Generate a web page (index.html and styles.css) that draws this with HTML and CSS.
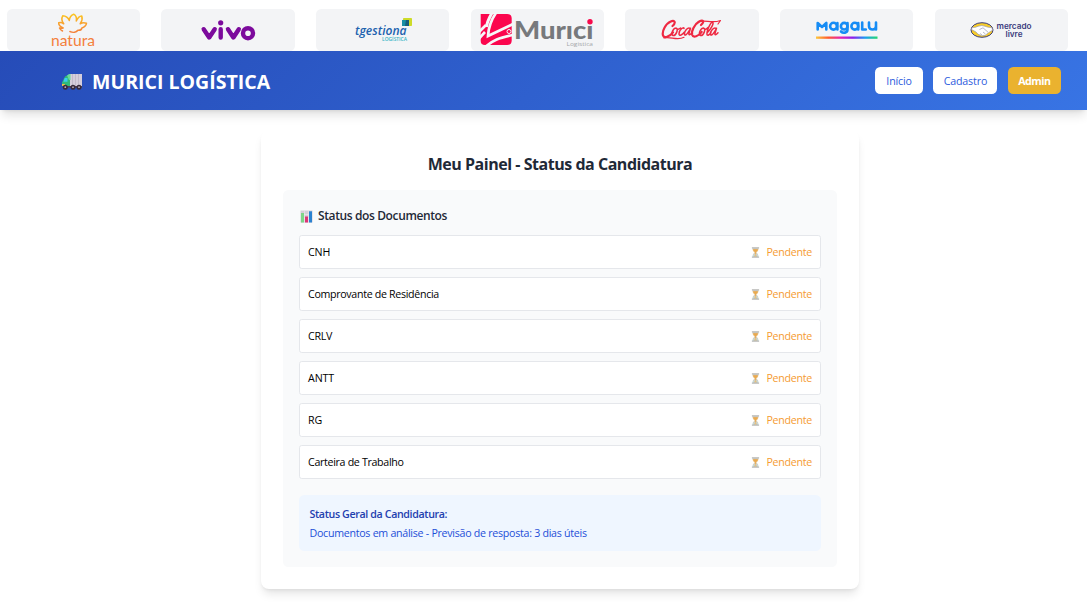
FILE: index.html
```html
<!DOCTYPE html>
<html lang="pt-BR">
<head>
<meta charset="utf-8">
<title>Murici Logística</title>
<link rel="stylesheet" href="styles.css">
</head>
<body>
<svg class="defs" width="0" height="0" aria-hidden="true">
  <defs>
    <linearGradient id="hg-sand" x1="0" y1="0" x2="0" y2="1"><stop offset="0" stop-color="#c5cdd2"/><stop offset=".3" stop-color="#f0b965"/><stop offset=".6" stop-color="#d9cbb0"/><stop offset="1" stop-color="#b8def2"/></linearGradient>
    <symbol id="hourglass" viewBox="0 0 9 11">
      <path d="M1.400 1.200h6.200c0 2.100-.9 3-2.200 4.300C6.700 6.800 7.600 7.700 7.600 9.800H1.400C1.400 7.700 2.300 6.800 3.600 5.500 2.300 4.200 1.400 3.300 1.400 1.200z" fill="url(#hg-sand)"/>
      <path d="M2 2.300h5L4.900 5.200v2.300h-.8V5.200z" fill="#e9a94f"/>
      <path d="M2.300 9.600 4.500 7.800l2.200 1.800z" fill="#edc078"/>
      <path d="M.9.900h7.200M.9 10.100h7.200" stroke="#a5a5a2" stroke-width="1"/>
    </symbol>
  </defs>
</svg>

<section class="partners">
  <div class="partner"><svg width="52" height="34" viewBox="0 0 52 34">
    <defs><linearGradient id="nat" x1="0" y1="0" x2="0" y2="1"><stop offset="0" stop-color="#fbc51f"/><stop offset="1" stop-color="#f4803c"/></linearGradient></defs>
    <path d="M15.500 18c-1.500-.8-2.500-1.700-3-3 1.300.3 2.700.3 3.700 0-3.500-1.500-4.700-3-4.500-5.200 2-.6 3.500-.2 5 1C14.700 8 14.500 5 15.700 2.800 19 3 21.300 5 22.300 7.500 22.600 4.500 24 2 26.700 1.200 29.300 2.500 29.800 5 29.300 8 30.500 5 32 3.200 34.800 3c.8 2.600.2 5.300-1.600 7.800 1.600-1.200 4-1.400 6.300-.6-.3 2.600-2 4-4.600 4.800-.3 1.500-2 2.500-4 2.300-1.500 2-5 2.500-8 1.200" fill="none" stroke="url(#nat)" stroke-width="1.500" stroke-linejoin="round" stroke-linecap="round"/>
    <text x="4" y="32.500" textLength="44" lengthAdjust="spacingAndGlyphs" class="natura">natura</text>
  </svg></div>
  <div class="partner"><svg width="56" height="28" viewBox="0 0 56 28">
    <path d="M3.700 13.200 9.200 21.500l5.500-8.300M20.700 13.200v8.300M28 13.200 33.400 21.500l5.400-8.300" fill="none" stroke="#7c0a9c" stroke-width="4.400" stroke-linecap="round" stroke-linejoin="round"/>
    <circle cx="20.700" cy="6.800" r="2.600" fill="#7c0a9c"/><circle cx="48" cy="17.200" r="5" fill="none" stroke="#7c0a9c" stroke-width="4.400"/>
  </svg></div>
  <div class="partner"><svg width="60" height="28" viewBox="0 0 60 28">
    <rect x="50" y="2" width="9" height="8" rx=".8" fill="#cddb29"/><rect x="49" y="4" width="6" height="6" fill="#188fa4"/><path d="M53 4h3v6h-4z" fill="#155d7c"/>
    <text x="2" y="18.500" textLength="51.500" lengthAdjust="spacingAndGlyphs" class="tgest">tgestiona</text>
    <text x="29" y="25" textLength="25" lengthAdjust="spacingAndGlyphs" class="tgest-sub">LOGÍSTICA</text>
  </svg></div>
  <div class="partner"><svg width="114" height="34" viewBox="0 0 114 34">
    <path d="M.7 1h26.500q4.500 0 4.500 4.500V27.500q0 4.500-4.500 4.500H5Q.7 32 .7 28z" fill="#fb064e"/>
    <path d="M16.500-1C11 7 8.500 14 8 23L34 10.500M-1 19l7-7M-1 25.500 5 19M5 34c8-7 14-9 28-12" fill="none" stroke="#f6f7f9" stroke-width="2.700"/>
    <path d="M12.500-1C9 5 7 9 6.500 14" fill="none" stroke="#f6f7f9" stroke-width="3"/>
    <circle cx="29" cy="18.500" r="2" fill="#fb064e" stroke="#f3f4f6"/>
    <text x="34" y="26" textLength="79.500" lengthAdjust="spacingAndGlyphs" class="murici">Murıcı</text>
    <circle cx="110" cy="8.700" r="2.700" fill="#f80a4c"/>
    <text x="86.500" y="32.500" textLength="26.500" lengthAdjust="spacingAndGlyphs" class="murici-sub">Logistica</text>
  </svg></div>
  <div class="partner"><svg width="62" height="26" viewBox="0 0 62 26">
    <g fill="none" stroke="#ee2942" stroke-linecap="round" stroke-linejoin="round" stroke-width="1.500">
      <path d="M11.500 9c4-3.500 2-6.500-1.800-4.500C5 6.500.7 14 2 18.400c1 3.200 6.500 1.600 10-3.100" stroke-width="2.200"/>
      <path d="M15 11c-3 0-5.500 6.500-3 7.500 3 .5 6-7 3-7.500 1 2 3 1.200 4.500 0M23 11.500c0-2-5 1-5 5.200 0 3.200 3.500.8 5.500-1.700M29 11.300c-2-1.500-6 3-5.500 6 .7 3 5-3.500 6-6l-1.500 5c-.5 2 1 1.800 3-.5"/>
      <path d="M40 8c4-3.500 2-5.500-1.800-3.500-4.500 2.500-8.200 9.500-7 13.500 1 3 6.500 1.400 9.500-3" stroke-width="2.200"/>
      <path d="M42.500 11c-3 0-5.500 6.500-3 7.500 3 .5 6-7 3-7.500 1 2 3 1.500 4.500-.5M46 16c4-4 7.500-10 5.500-10.700-2-.3-6 9-5.500 12 .3 1.800 2.500.6 4-1.700M55 11.300c-2-1.500-6 3-5.500 6 .7 3 5-3.500 6-6l-1.500 5c-.5 2 1 1.800 3-.5"/>
      <path d="M3 21c6-2 13 3 20-.7M37 5C44 2 50 7 59.500 3.500L57 7" stroke-width="1.200"/>
    </g>
  </svg></div>
  <div class="partner"><svg width="64" height="24" viewBox="0 0 64 24">
    <defs><linearGradient id="rain"><stop stop-color="#fcc83c"/><stop offset=".2" stop-color="#ff5a2c"/><stop offset=".4" stop-color="#e622b2"/><stop offset=".6" stop-color="#8a20ed"/><stop offset=".8" stop-color="#1b9ef2"/><stop offset="1" stop-color="#25d96d"/></linearGradient></defs>
    <g fill="none" stroke="#168cf5" stroke-width="2.600" stroke-linecap="round" stroke-linejoin="round">
      <path d="M2.700 11.500V5l4.300 4 4.300-4v6.500M22.400 5v6.500"/><circle cx="18.500" cy="8.200" r="3.400"/><circle cx="29.200" cy="8.200" r="3.300"/><path d="M32.500 5v6.500c0 3.700-4.500 4-6.500 2"/><circle cx="39.800" cy="8.200" r="3.400"/><path d="M43.200 5v6.500M47.200 4.500v7h3.600M54 4.500v3.700c0 4.400 7 4.400 7 0V4.500M61 8v3.500"/>
    </g>
    <rect x="1" y="18.500" width="61.500" height="2.300" fill="url(#rain)"/>
  </svg></div>
  <div class="partner"><svg width="64" height="20" viewBox="0 0 64 20">
    <ellipse cx="13" cy="10" rx="11" ry="7.300" fill="#f8cd28" stroke="#3c3d78"/>
    <path d="M3 7.600q4 0 6-1.300 4-1.600 7 0 3 1.300 7 1.300l.5 2.600-4 2.500q-3 3.600-7 3-4-1-5.500-3.700L2.500 9.500z" fill="#fff" stroke="#8f91a8" stroke-width=".6"/>
    <path d="m10.500 9.500 3.500-1.700 5 4.400M11 13.500l2 1.500m1-3 2.500 2" stroke="#8388a8" stroke-width=".6" fill="none"/>
    <text x="27.500" y="9" textLength="35" lengthAdjust="spacingAndGlyphs" class="ml">mercado</text>
    <text x="36.500" y="16.500" textLength="17" lengthAdjust="spacingAndGlyphs" class="ml">livre</text>
  </svg></div>
</section>

<header class="navbar">
  <div class="brand">
    <svg class="truck" width="22" height="18" viewBox="0 0 22 18">
      <path d="M9 1h12v12H9z" fill="#d5cedb"/><path d="M11.500 1v12M14.500 1v12M17.500 1v12" stroke="#bbb2c3" stroke-width=".7"/>
      <path d="M3.500 4.500Q4 3 6 2.500h3V13H1V9.500z" fill="#31bb79"/><path d="M6 2.500 8 1h1.500v6H8z" fill="#69dc99"/>
      <path d="M3.700 5h2.800v3.700H2.400z" fill="#39cdef"/><path d="M1 11h3v2H1z" fill="#e9c34c"/><path d="M2 13h19v1.500H2z" fill="#54424f"/>
      <g fill="#382b3b"><circle cx="4.300" cy="14.200" r="2.500"/><circle cx="12" cy="14.200" r="2.500"/><circle cx="18" cy="14.200" r="2.500"/></g>
      <g fill="#b4a9b5"><circle cx="4.300" cy="14.200" r=".9"/><circle cx="12" cy="14.200" r=".9"/><circle cx="18" cy="14.200" r=".9"/></g>
    </svg>
    <span class="brand-name">MURICI LOGÍSTICA</span>
  </div>
  <nav class="links">
    <a class="btn btn-home">Início</a><a class="btn btn-signup">Cadastro</a><a class="btn btn-admin">Admin</a>
  </nav>
</header>

<main class="card">
  <h1 class="title">Meu Painel - Status da Candidatura</h1>
  <section class="panel">
    <h2 class="subtitle"><svg width="13" height="13" viewBox="0 0 13 13"><rect x=".5" y=".5" width="12" height="12" fill="#d4ced8"/><path d="M.5 4.500h12M.5 8.500h12M4.500.5v12M8.500.5v12" stroke="#eee9f0" stroke-width=".6"/><path d="M1 3h3v9.500H1z" fill="#7dd488"/><path d="M5 6.500h3v6H5z" fill="#dc3576"/><path d="M9 1.300h3v11.200H9z" fill="#2c82d0"/></svg><span>Status dos Documentos</span></h2>
    <ul class="docs">
      <li class="doc"><span class="short">CNH</span><span class="state"><svg width="9" height="11"><use href="#hourglass"/></svg><b>Pendente</b></span></li>
      <li class="doc"><span class="name">Comprovante de Residência</span><span class="state"><svg width="9" height="11"><use href="#hourglass"/></svg><b>Pendente</b></span></li>
      <li class="doc"><span class="name">CRLV</span><span class="state"><svg width="9" height="11"><use href="#hourglass"/></svg><b>Pendente</b></span></li>
      <li class="doc"><span class="short">ANTT</span><span class="state"><svg width="9" height="11"><use href="#hourglass"/></svg><b>Pendente</b></span></li>
      <li class="doc"><span class="short">RG</span><span class="state"><svg width="9" height="11"><use href="#hourglass"/></svg><b>Pendente</b></span></li>
      <li class="doc"><span class="name">Carteira de Trabalho</span><span class="state"><svg width="9" height="11"><use href="#hourglass"/></svg><b>Pendente</b></span></li>
    </ul>
    <div class="overall">
      <p class="overall-title">Status Geral da Candidatura:</p>
      <p class="overall-text">Documentos em análise - Previsão de resposta: 3 dias úteis</p>
    </div>
  </section>
</main>
</body>
</html>
```
FILE: styles.css
```css
* { box-sizing: border-box; margin: 0; padding: 0; }
body { height: 616px; overflow: hidden; background: #fff; font-family: "Open Sans", "Noto Sans", sans-serif; font-size: 10.67px; color: #000; }
.defs { display: block; height: 0; }
svg { display: block; flex: none; }
.partners { display: grid; grid-template-columns: repeat(7, 133.33px); gap: 21.33px; padding: 9px 0 0 6.8px; height: 51px; }
.partner { height: 42px; border-radius: 5.3px; background: #f3f4f6; display: flex; align-items: center; justify-content: center; }
.natura { font: 400 15px Lato, sans-serif; fill: #f4803c; }
.tgest { font: italic 600 12px "Open Sans", sans-serif; fill: #2162ae; }
.tgest-sub { font: 600 5px "Open Sans", sans-serif; fill: #31b3c5; }
.murici { font: 900 25.5px Lato, sans-serif; fill: #77797c; }
.murici-sub { font: 400 5.5px "Open Sans", sans-serif; fill: #a4a6a9; }
.ml { font: 600 8px Inter, sans-serif; fill: #3b3c7d; }

.navbar { height: 59px; padding: 0 26px 0 61px; display: flex; align-items: center; justify-content: space-between; background: linear-gradient(135deg, #264cb8, #3874e4); box-shadow: 0 6.7px 10px -2px rgba(0,0,0,.12), 0 3px 4px -3px rgba(0,0,0,.12); }
.brand { display: flex; align-items: center; gap: 9px; color: #fff; }
.brand-name { font-size: 19.5px; font-weight: 700; line-height: 28px; padding-top: 3px; letter-spacing: .02px; }
.truck { margin-top: 3px; }
.links { display: flex; gap: 10.3px; }
.btn { height: 27px; border-radius: 5.3px; background: #fff; color: #2d5bdd; display: flex; align-items: center; justify-content: center; font-weight: 500; letter-spacing: -.15px; }
.btn-home { width: 48px; }
.btn-signup { width: 64px; }
.btn-admin { width: 53.3px; background: #eab22f; color: #fff; font-weight: 700; letter-spacing: -.5px; }

.card { width: 598px; height: 458px; margin: 21px 0 0 261px; padding: 22px; border-radius: 8px; background: #fff; box-shadow: 0 6.7px 10px -2px rgba(0,0,0,.1), 0 2.7px 4px -2.7px rgba(0,0,0,.1); }
.title { height: 37px; line-height: 23px; font-size: 16px; font-weight: 700; text-align: center; color: #1f2937; letter-spacing: -.47px; }
.panel { height: 377px; padding: 16px; border-radius: 5.3px; background: #f9fafb; }
.subtitle { height: 29px; display: flex; gap: 5px; line-height: 20px; font-size: 12px; font-weight: 600; color: #1f2937; padding-left: 1px; letter-spacing: -.38px; }
.subtitle svg { margin-top: 4px; }
.docs { list-style: none; display: grid; gap: 8px; }
.doc { height: 34px; padding: 0 8px; border: 1px solid #e5e7eb; border-radius: 2.7px; background: #fff; display: flex; align-items: center; justify-content: space-between; }
.name { letter-spacing: -.32px; }
.short { letter-spacing: -.1px; }
.state { display: flex; align-items: center; gap: 6px; color: #f59b32; }
.state b { font-weight: 500; letter-spacing: -.28px; }
.overall { height: 56px; margin-top: 16px; padding: 10.5px; border-radius: 5.3px; background: #eff6ff; }
.overall-title { line-height: 16px; margin-bottom: 3px; color: #1e40af; font-weight: 600; letter-spacing: -.37px; }
.overall-text { line-height: 16px; color: #1d4ed8; letter-spacing: -.28px; }
```
